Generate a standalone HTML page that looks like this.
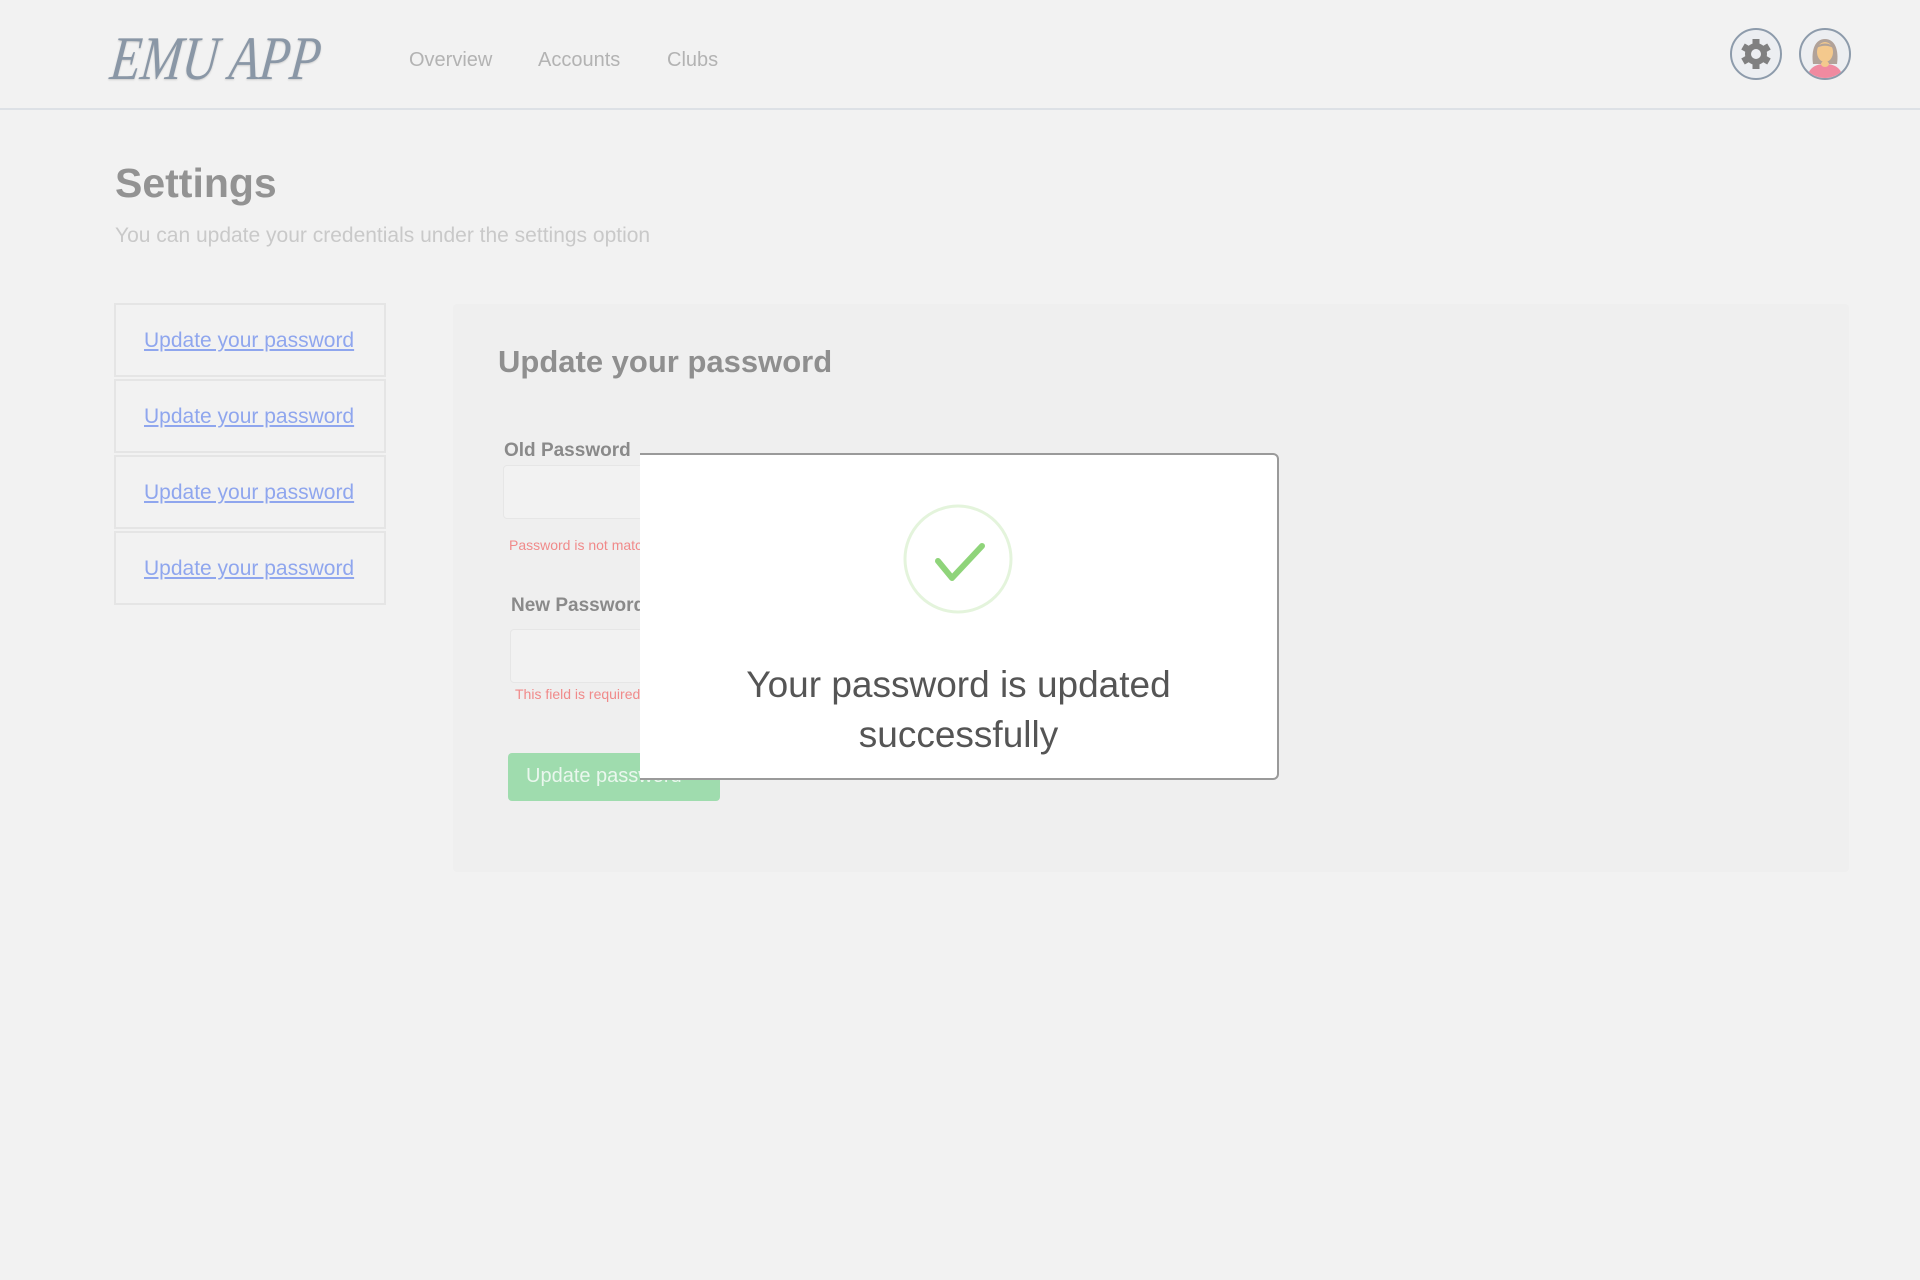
<!DOCTYPE html>
<html><head><meta charset="utf-8"><style>
*{box-sizing:border-box;margin:0;padding:0}
body{width:1920px;height:1280px;background:#f2f2f2;font-family:"Liberation Sans",sans-serif;position:relative;overflow:hidden}
.hdr{position:absolute;left:0;top:0;width:1920px;height:110px;border-bottom:2px solid #dde1e6;background:#f2f2f2}
.logo{position:absolute;left:115px;top:24px;font-family:"Liberation Serif",serif;font-style:italic;font-size:62px;color:#8a97a6;letter-spacing:0px;transform-origin:0 0;transform:scaleX(0.8) skewX(-8deg);text-shadow:0 1px 2px #ccc;white-space:nowrap}
.nav{position:absolute;top:49px;font-size:20px;color:#b3b3b3}
.circ{position:absolute;top:28px;width:52px;height:52px;border-radius:50%;border:2px solid #8d9bab;background:#eceef1;overflow:hidden}
h1{position:absolute;left:115px;top:160px;font-size:41px;color:#939393;font-weight:bold}
.sub{position:absolute;left:115px;top:224px;font-size:21px;color:#c9c9c9}
.side{position:absolute;left:114px;width:272px;height:74px;border:2px solid #e5e5e5;font-size:21px}
.side a{position:absolute;left:28px;top:24px;color:#8fa6ee;text-decoration:underline}
.panel{position:absolute;left:453px;top:304px;width:1396px;height:568px;background:#efefef;border-radius:4px}
.h2{position:absolute;left:498px;top:344px;font-size:31px;font-weight:bold;color:#8f8f8f}
.lbl{position:absolute;font-size:19px;font-weight:bold;color:#8a8a8a}
.inp{position:absolute;width:400px;height:54px;border:1px solid #e6e6e6;border-radius:4px;background:#f2f2f2}
.err{position:absolute;font-size:14px;color:#f08a8a}
.btn{position:absolute;left:508px;top:753px;width:212px;height:48px;background:#9fdcae;border-radius:4px;color:#eaf7ee;font-size:20px;padding:12px 0 0 18px}
.modal{position:absolute;left:640px;top:453px;width:639px;height:327px;background:#fff;border-top:2px solid #9a9a9a;border-right:2px solid #9a9a9a;border-bottom:2px solid #9a9a9a;border-radius:0 6px 6px 0}
.msg{position:absolute;left:0;width:637px;top:205px;text-align:center;font-size:37px;line-height:50px;color:#555}
</style></head><body>
<div class="hdr">
<div class="logo">EMU APP</div>
<div class="nav" style="left:409px">Overview</div>
<div class="nav" style="left:538px">Accounts</div>
<div class="nav" style="left:667px">Clubs</div>
<div class="circ" style="left:1730px"><svg width="48" height="48" viewBox="0 0 48 48"><g transform="translate(24,24)" fill="#808080"><circle r="11"/><g><rect x="-3.5" y="-15" width="7" height="30"/><rect x="-3.5" y="-15" width="7" height="30" transform="rotate(60)"/><rect x="-3.5" y="-15" width="7" height="30" transform="rotate(120)"/></g><circle r="5" fill="#eceef1"/></g></svg></div>
<div class="circ" style="left:1799px"><svg width="48" height="48" viewBox="0 0 48 48"><path d="M12 34 C10 20 14 9 24 9 C34 9 38 20 36 34 Z" fill="#b1a299"/><ellipse cx="24" cy="22" rx="8" ry="10" fill="#f4c98d"/><path d="M16 18 C18 12 30 12 32 18 C28 15 20 15 16 18Z" fill="#b1a299"/><path d="M6 52 C6 38 14 34 24 34 C34 34 42 38 42 52Z" fill="#f08aa0"/><ellipse cx="24" cy="34" rx="4" ry="3" fill="#f4c98d"/></svg></div>
</div>
<h1>Settings</h1>
<div class="sub">You can update your credentials under the settings option</div>
<div class="side" style="top:303px"><a>Update your password</a></div>
<div class="side" style="top:379px"><a>Update your password</a></div>
<div class="side" style="top:455px"><a>Update your password</a></div>
<div class="side" style="top:531px"><a>Update your password</a></div>
<div class="panel"></div>
<div class="h2">Update your password</div>
<div class="lbl" style="left:504px;top:440px">Old Password</div>
<div class="inp" style="left:503px;top:465px"></div>
<div class="err" style="left:509px;top:537px">Password is not matching</div>
<div class="lbl" style="left:511px;top:595px">New Password</div>
<div class="inp" style="left:510px;top:629px"></div>
<div class="err" style="left:515px;top:686px">This field is required</div>
<div class="btn">Update password</div>
<div class="modal">
<svg style="position:absolute;left:262px;top:48px" width="112" height="112" viewBox="0 0 112 112"><circle cx="56" cy="56" r="53" fill="none" stroke="#e4f4dc" stroke-width="3"/><path d="M36 58 L50 75 L80 43" fill="none" stroke="#8fd47a" stroke-width="6" stroke-linecap="round" stroke-linejoin="round"/></svg>
<div class="msg">Your password is updated<br>successfully</div>
</div>
</body></html>
